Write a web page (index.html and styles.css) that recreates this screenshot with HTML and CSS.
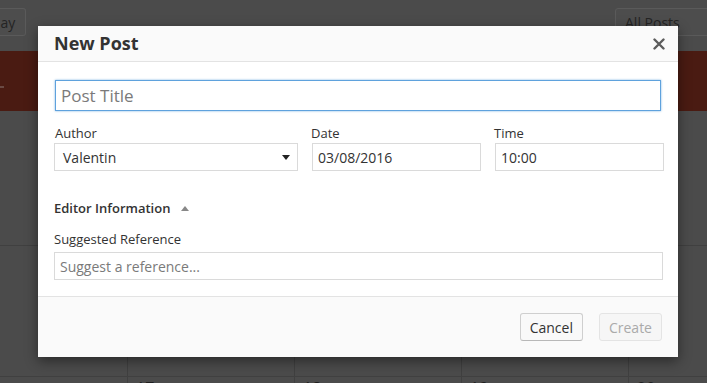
FILE: index.html
```html
<!DOCTYPE html>
<html lang="en">
<head>
    <meta charset="UTF-8">
    <meta name="viewport" content="width=device-width, initial-scale=1.0">
    <title>New Post</title>
    <link rel="stylesheet" href="styles.css">
</head>
<body>
    <!-- Calendar behind the dialog -->
    <div class="page">
        <div class="toolbar">
            <button class="tb-btn tb-today">ay</button>
            <button class="tb-btn tb-filter">All Posts</button>
        </div>
        <div class="banner"><span class="banner-dot"></span></div>
        <div class="calendar">
            <div class="week week-first">
                <div class="day"></div><div class="day"></div><div class="day"></div><div class="day"></div><div class="day"></div>
            </div>
            <div class="week week-second">
                <div class="day"></div><div class="day"></div><div class="day"></div><div class="day"></div><div class="day"></div>
            </div>
            <div class="week">
                <div class="day"></div>
                <div class="day"><span class="day-num">17</span></div>
                <div class="day"><span class="day-num">18</span></div>
                <div class="day"><span class="day-num">19</span></div>
                <div class="day"><span class="day-num">20</span></div>
            </div>
        </div>
    </div>

    <!-- New Post dialog -->
    <div class="modal">
        <div class="modal-header">
            <span class="modal-title">New Post</span>
            <svg class="modal-close" width="12" height="12" viewBox="0 0 12 12">
                <path d="M1.5 1.5 L10.5 10.5 M10.5 1.5 L1.5 10.5" stroke="#5c5c5c" stroke-width="2.4" stroke-linecap="round"/>
            </svg>
        </div>

        <div class="modal-body">
            <input class="title-input" type="text" placeholder="Post Title">

            <div class="field-row">
                <div class="field">
                    <label>Author</label>
                    <div class="select">
                        <span>Valentin</span>
                        <svg width="8" height="5" viewBox="0 0 8 5"><path d="M0 0 H8 L4 5 Z" fill="#222"/></svg>
                    </div>
                </div>
                <div class="field">
                    <label>Date</label>
                    <input class="text-input" type="text" value="03/08/2016">
                </div>
                <div class="field">
                    <label>Time</label>
                    <input class="text-input" type="text" value="10:00">
                </div>
            </div>

            <div class="section-head">
                <span>Editor Information</span>
                <svg width="8" height="5" viewBox="0 0 8 5"><path d="M0 5 H8 L4 0 Z" fill="#888"/></svg>
            </div>

            <label>Suggested Reference</label>
            <input class="text-input" type="text" placeholder="Suggest a reference...">
        </div>

        <div class="modal-footer">
            <button class="btn">Cancel</button>
            <button class="btn btn-disabled">Create</button>
        </div>
    </div>
</body>
</html>
```

FILE: styles.css
```css
html, body {
    margin: 0;
    padding: 0;
    height: 100%;
    overflow: hidden;
    font-family: "Open Sans", "Liberation Sans", sans-serif;
    background: #4b4b4b;
}
.page {
    width: 707px;
    height: 383px;
    overflow: hidden;
}
.toolbar {
    height: 51px;
    display: flex;
    justify-content: space-between;
    align-items: flex-start;
    padding-top: 8px;
    box-sizing: border-box;
}
.tb-btn {
    height: 28px;
    border: 1px solid #5a5a5a;
    border-radius: 3px;
    background: #4d4d4d;
    color: #242424;
    font-family: inherit;
    font-size: 14px;
    padding: 0 9px;
}
.tb-today {
    border-left: none;
    border-radius: 0 3px 3px 0;
    padding: 0 9px 0 0;
    width: 26px;
}
.tb-filter {
    width: 100px;
    margin-right: -8px;
    text-align: left;
}
.banner {
    height: 60px;
    background: #4a1b12;
    position: relative;
}
.banner-dot {
    position: absolute;
    left: 0;
    top: 35px;
    width: 4px;
    height: 2px;
    background: #6a4a44;
}
.calendar {
    display: flex;
    flex-direction: column;
}
.week {
    display: flex;
    border-bottom: 1px solid #404040;
}
.week-first {
    height: 135px;
    box-sizing: border-box;
}
.week-second {
    height: 131px;
    box-sizing: border-box;
}
.day {
    width: 167px;
    flex-shrink: 0;
    border-right: 1px solid #404040;
    box-sizing: border-box;
    padding-left: 8px;
}
.day:first-child {
    width: 128px;
}
.day-num {
    font-size: 16px;
    line-height: 16px;
    color: #1e1e1e;
}

/* dialog */
.modal {
    position: absolute;
    left: 38px;
    top: 26px;
    width: 640px;
    background: #fff;
    box-shadow: 0 4px 12px rgba(0, 0, 0, 0.45);
    color: #333;
}
.modal-header {
    height: 36px;
    box-sizing: border-box;
    border-bottom: 1px solid #e3e3e3;
    background: #fafafa;
    display: flex;
    justify-content: space-between;
    align-items: center;
    padding: 0 13px 0 16px;
}
.modal-title {
    font-size: 18px;
    font-weight: 700;
    line-height: 35px;
    color: #333;
}
.modal-body {
    padding: 18px 15px 16px 16px;
    display: flex;
    flex-direction: column;
}
.title-input {
    height: 31px;
    margin: 0 2px 0 1px;
    box-sizing: border-box;
    border: 1px solid #5fa2dd;
    box-shadow: 0 0 2px rgba(95, 162, 221, 0.8);
    outline: none;
    padding: 0 5px;
    font-family: inherit;
    font-size: 17px;
    color: #333;
}
.title-input::placeholder {
    color: #7a7a7a;
}
.field-row {
    display: grid;
    grid-template-columns: 244px 169px 169px;
    column-gap: 14px;
    margin-top: 13px;
}
.field {
    display: flex;
    flex-direction: column;
}
label {
    font-size: 13px;
    line-height: 18px;
    color: #333;
    margin-bottom: 1px;
}
.field:first-child label {
    margin-left: 1px;
}
.field + .field label {
    margin-left: -1px;
}
.select {
    height: 28px;
    box-sizing: border-box;
    border: 1px solid #dadada;
    display: flex;
    justify-content: space-between;
    align-items: center;
    padding: 0 7px 0 8px;
    font-size: 14px;
    color: #333;
}
.text-input {
    height: 28px;
    box-sizing: border-box;
    border: 1px solid #dadada;
    outline: none;
    padding: 0 5px;
    font-family: inherit;
    font-size: 14px;
    color: #333;
}
.text-input::placeholder {
    color: #7a7a7a;
}
.section-head {
    display: flex;
    align-items: center;
    gap: 11px;
    margin-top: 28px;
    margin-bottom: 13px;
    font-size: 13px;
    line-height: 18px;
    font-weight: 600;
    color: #333;
}
.modal-body > label {
    margin-bottom: 4px;
}
.modal-footer {
    border-top: 1px solid #e3e3e3;
    background: #fafafa;
    padding: 16px 16px;
    display: flex;
    justify-content: flex-end;
    gap: 16px;
}
.btn {
    height: 28px;
    padding: 0 9px;
    border: 1px solid #cfcfcf;
    border-bottom-color: #b8b8b8;
    border-radius: 3px;
    background: #f9f9f9;
    color: #333;
    font-family: inherit;
    font-size: 14px;
}
.btn-disabled {
    background: #f6f6f6;
    border-color: #e4e4e4;
    color: #aaa;
}
```
